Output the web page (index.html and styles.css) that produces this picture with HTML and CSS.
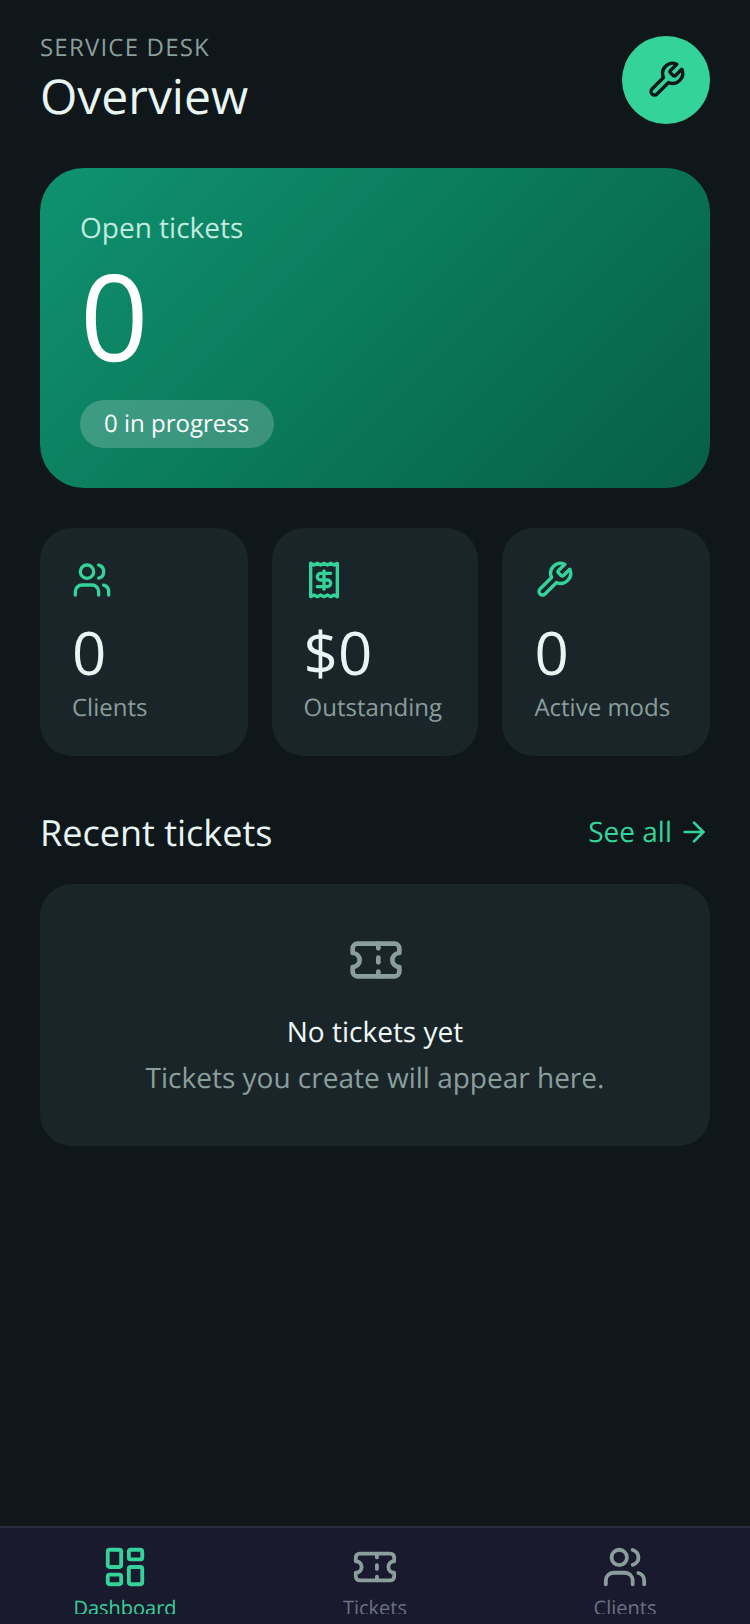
FILE: index.html
```html
<!DOCTYPE html>
<html lang="en">
<head>
<meta charset="utf-8">
<title>Service Desk</title>
<link rel="stylesheet" href="styles.css">
</head>
<body>
<svg class="defs" width="0" height="0" aria-hidden="true">
  <symbol id="i-wrench" viewBox="0 0 24 24"><path d="M14.7 6.3a1 1 0 0 0 0 1.4l1.6 1.6a1 1 0 0 0 1.4 0l3.77-3.77a6 6 0 0 1-7.94 7.94l-6.91 6.91a2.12 2.12 0 0 1-3-3l6.91-6.91a6 6 0 0 1 7.94-7.94l-3.76 3.76z"/></symbol>
  <symbol id="i-users" viewBox="0 0 24 24"><path d="M16 21v-2a4 4 0 0 0-4-4H6a4 4 0 0 0-4 4v2"/><circle cx="9" cy="7" r="4"/><path d="M22 21v-2a4 4 0 0 0-3-3.87"/><path d="M16 3.13a4 4 0 0 1 0 7.75"/></symbol>
  <symbol id="i-receipt" viewBox="0 0 24 24"><path d="M4 2v20l2-1 2 1 2-1 2 1 2-1 2 1 2-1 2 1V2l-2 1-2-1-2 1-2-1-2 1-2-1-2 1Z"/><path d="M16 8h-6a2 2 0 1 0 0 4h4a2 2 0 1 1 0 4H8"/><path d="M12 17.5v-11"/></symbol>
  <symbol id="i-ticket" viewBox="0 0 24 24"><path d="M2 9a3 3 0 0 1 0 6v2a2 2 0 0 0 2 2h16a2 2 0 0 0 2-2v-2a3 3 0 0 1 0-6V7a2 2 0 0 0-2-2H4a2 2 0 0 0-2 2Z"/><path d="M13 5v2"/><path d="M13 17v2"/><path d="M13 11v2"/></symbol>
  <symbol id="i-dash" viewBox="0 0 24 24"><rect x="3" y="3" width="7" height="9" rx="1"/><rect x="14" y="3" width="7" height="5" rx="1"/><rect x="14" y="12" width="7" height="9" rx="1"/><rect x="3" y="16" width="7" height="5" rx="1"/></symbol>
  <symbol id="i-arrow" viewBox="0 0 24 24"><path d="M5 12h14"/><path d="m12 5 7 7-7 7"/></symbol>
</svg>
<div class="app">
  <main class="main">
    <header class="top">
      <div>
        <div class="eyebrow">SERVICE DESK</div>
        <h1 class="title">Overview</h1>
      </div>
      <button class="fab"><svg class="icon icon-40"><use href="#i-wrench"/></svg></button>
    </header>

    <section class="hero">
      <div class="hero-label">Open tickets</div>
      <div class="hero-num">0</div>
      <div class="pill">0 in progress</div>
    </section>

    <section class="stats">
      <div class="stat">
        <svg class="icon icon-40 accent"><use href="#i-users"/></svg>
        <div class="stat-num">0</div>
        <div class="stat-label">Clients</div>
      </div>
      <div class="stat">
        <svg class="icon icon-40 accent"><use href="#i-receipt"/></svg>
        <div class="stat-num">$0</div>
        <div class="stat-label">Outstanding</div>
      </div>
      <div class="stat">
        <svg class="icon icon-40 accent"><use href="#i-wrench"/></svg>
        <div class="stat-num">0</div>
        <div class="stat-label">Active mods</div>
      </div>
    </section>

    <div class="section-head">
      <h2 class="section-title">Recent tickets</h2>
      <a class="see-all">See all <svg class="icon icon-32"><use href="#i-arrow"/></svg></a>
    </div>

    <section class="empty">
      <svg class="icon icon-56 muted empty-icon"><use href="#i-ticket"/></svg>
      <div class="empty-title">No tickets yet</div>
      <div class="empty-sub">Tickets you create will appear here.</div>
    </section>
  </main>

  <nav class="nav">
    <div class="nav-inner">
      <a class="tab active"><svg class="icon icon-46"><use href="#i-dash"/></svg><span>Dashboard</span></a>
      <a class="tab"><svg class="icon icon-46"><use href="#i-ticket"/></svg><span>Tickets</span></a>
      <a class="tab"><svg class="icon icon-46"><use href="#i-users"/></svg><span>Clients</span></a>
    </div>
  </nav>
</div>
</body>
</html>
```

FILE: styles.css
```css
* { box-sizing: border-box; }
html, body { margin: 0; padding: 0; }
body {
  width: 750px;
  height: 1624px;
  overflow: hidden;
  background: #0f171a;
  font-family: "Open Sans", sans-serif;
  color: #f0f9f8;
  text-rendering: geometricPrecision;
}
.defs { position: absolute; }
.app { height: 1624px; display: flex; flex-direction: column; }
.main { flex: 1; min-height: 0; padding: 36px 40px 0; }

.icon {
  display: block;
  flex: none;
  fill: none;
  stroke: currentColor;
  stroke-width: 2;
  stroke-linecap: round;
  stroke-linejoin: round;
}
.icon-32 { width: 32px; height: 32px; }
.icon-40 { width: 40px; height: 40px; }
.icon-46 { width: 46px; height: 46px; }
.icon-56 { width: 56px; height: 56px; }
.accent { color: #34d399; }
.muted { color: #8a9e9b; }

.top { display: flex; justify-content: space-between; align-items: flex-start; height: 88px; }
.eyebrow { font-size: 24px; line-height: 24px; letter-spacing: 1.2px; color: #8a9e9b; }
.title { margin: 7px 0 0; font-size: 48px; line-height: 60px; font-weight: 400; color: #e8f5f3; }
.fab {
  width: 88px;
  height: 88px;
  border: 0;
  padding: 0;
  border-radius: 50%;
  background: #34d399;
  color: #0f171a;
  display: flex;
  align-items: center;
  justify-content: center;
}

.hero {
  margin-top: 44px;
  height: 320px;
  border-radius: 44px;
  padding: 40px 40px 0;
  background: linear-gradient(135deg, #0f9270 0%, #065f46 100%);
}
.hero-label { font-size: 28px; line-height: 40px; color: #c0eadd; }
.hero-num { font-size: 120px; line-height: 128px; color: #fff; margin-top: 4px; }
.pill {
  display: inline-block;
  margin-top: 20px;
  height: 48px;
  padding: 0 25px 0 24px;
  border-radius: 24px;
  background: rgba(255, 255, 255, 0.2);
  font-size: 24px;
  line-height: 48px;
  color: #fff;
}

.stats { margin-top: 40px; display: grid; grid-template-columns: 207.6px 206.8px 207.6px; gap: 24px; }
.stat { height: 228px; border-radius: 32px; background: #1a2529; padding: 32px; }
.stat-num { margin-top: 16px; font-size: 60px; line-height: 72px; color: #e8f5f3; }
.stat-label { margin-top: 3px; font-size: 24px; line-height: 34px; color: #8a9e9b; }

.section-head { margin-top: 52px; height: 48px; display: flex; justify-content: space-between; align-items: center; }
.section-title { margin: 2px 0 0; font-size: 36px; line-height: 48px; font-weight: 400; color: #e8f5f3; }
.see-all { display: flex; align-items: center; gap: 6px; font-size: 28px; line-height: 40px; color: #34d399; }

.empty {
  margin-top: 28px;
  height: 262px;
  border-radius: 32px;
  background: #1a2529;
  padding: 48px 32px 0;
  display: flex;
  flex-direction: column;
  align-items: center;
}
.empty-icon { margin-left: 2px; }
.empty-title { margin-top: 24px; font-size: 28px; line-height: 40px; color: #f0f9f8; }
.empty-sub { margin-top: 6px; font-size: 28px; line-height: 40px; color: #8a9e9b; }

.nav { height: 98px; background: #1a1a2e; border-top: 2px solid #2a2a3e; }
.nav-inner { height: 86px; overflow: hidden; display: flex; }
.tab {
  flex: 1;
  display: flex;
  flex-direction: column;
  align-items: center;
  padding-top: 16px;
  font-size: 20px;
  line-height: 28px;
  color: #8a9e9b;
}
.tab span { margin-top: 4px; color: #6c7082; }
.tab.active { color: #34d399; }
.tab.active span { color: #34d399; }
```
